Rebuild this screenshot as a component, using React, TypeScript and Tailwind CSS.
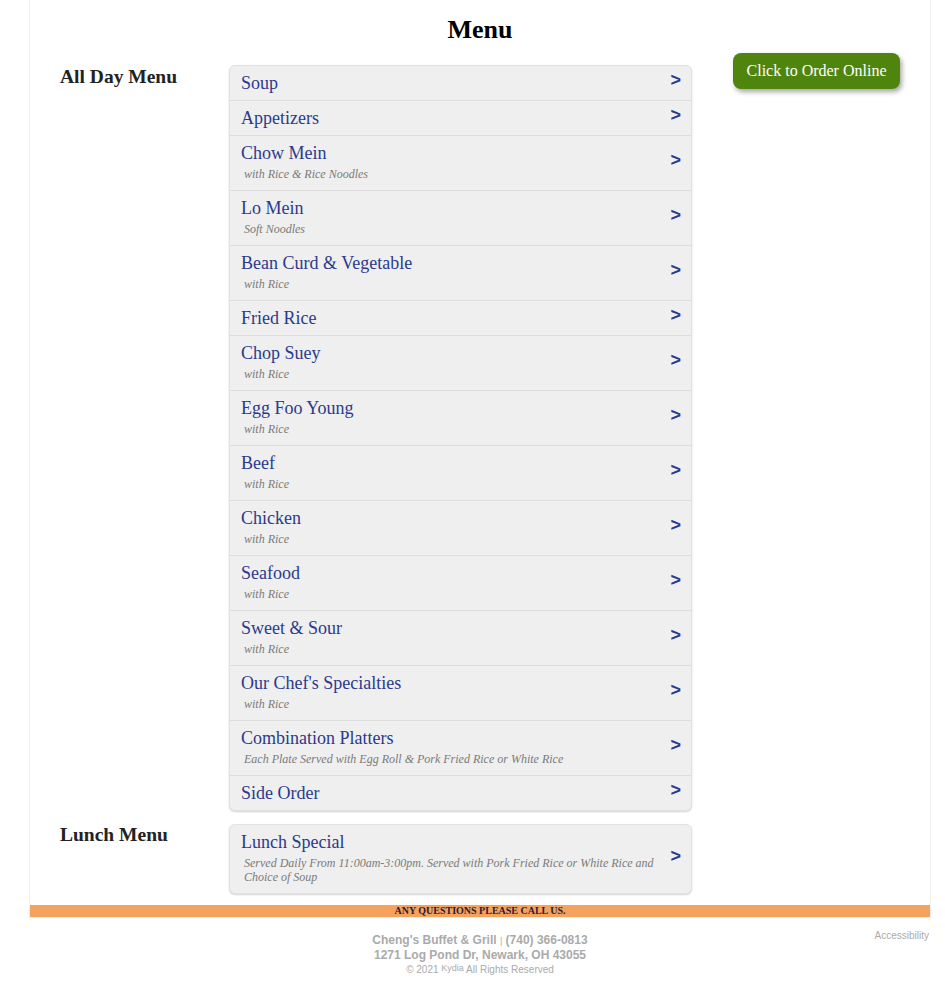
import React from "react";

type Item = { name: string; sub?: string };

const allDay: Item[] = [
  { name: "Soup" },
  { name: "Appetizers" },
  { name: "Chow Mein", sub: "with Rice & Rice Noodles" },
  { name: "Lo Mein", sub: "Soft Noodles" },
  { name: "Bean Curd & Vegetable", sub: "with Rice" },
  { name: "Fried Rice" },
  { name: "Chop Suey", sub: "with Rice" },
  { name: "Egg Foo Young", sub: "with Rice" },
  { name: "Beef", sub: "with Rice" },
  { name: "Chicken", sub: "with Rice" },
  { name: "Seafood", sub: "with Rice" },
  { name: "Sweet & Sour", sub: "with Rice" },
  { name: "Our Chef's Specialties", sub: "with Rice" },
  { name: "Combination Platters", sub: "Each Plate Served with Egg Roll & Pork Fried Rice or White Rice" },
  { name: "Side Order" },
];

const lunch: Item[] = [
  {
    name: "Lunch Special",
    sub: "Served Daily From 11:00am-3:00pm. Served with Pork Fried Rice or White Rice and Choice of Soup",
  },
];

function MenuList({ items }: { items: Item[] }) {
  return (
    <div className="w-[463px] rounded-[6px] border border-[#e2e2e2] bg-[#efefef] shadow-[0_1px_2px_rgba(0,0,0,0.18)]">
      {items.map((item, i) => (
        <div
          key={item.name}
          className={`flex items-center pl-[11px] pr-[10px] pt-[7px] pb-[7px] ${i > 0 ? "border-t border-[#dcdcdc]" : ""}`}
        >
          <div className="flex-1 min-w-0 pr-[14px]">
            <div className="text-[18px] leading-[20px] text-[#2b3a8c]">{item.name}</div>
            {item.sub && (
              <div className="mt-[4px] mb-[2px] pl-[3px] text-[12px] leading-[14px] italic text-[#7a7a7a]">
                {item.sub}
              </div>
            )}
          </div>
          <span className="-mt-[6px] font-['Liberation_Sans',Arial,sans-serif] text-[18px] font-bold leading-[20px] text-[#2b3a8c]">
            &gt;
          </span>
        </div>
      ))}
    </div>
  );
}

export default function App() {
  return (
    <div className="min-h-screen bg-white font-['Liberation_Serif','Times_New_Roman',serif]">
      <div className="ml-[29px] w-[902px] border-x border-b border-[#f0f0f0]">
        <h1 className="pt-[15px] text-center text-[26px] font-bold leading-[30px] text-black">Menu</h1>
        <div className="mt-[8px] flex">
          <div>
            <div className="flex pl-[30px]">
              <div className="mt-[13px] w-[169px] text-[19.5px] font-bold leading-[22px] text-[#222]">All Day Menu</div>
              <div className="mt-[12px]">
                <MenuList items={allDay} />
              </div>
            </div>
            <div className="mt-[13px] flex pl-[30px]">
              <div className="w-[169px] text-[19.5px] font-bold leading-[22px] text-[#222]">Lunch Menu</div>
              <MenuList items={lunch} />
            </div>
          </div>
          <div className="ml-[41px]">
            <button className="h-[36px] w-[167px] rounded-[8px] bg-[#4f850d] text-[16px] leading-[20px] text-white shadow-[2px_3px_5px_rgba(0,0,0,0.35)]">
              Click to Order Online
            </button>
          </div>
        </div>
        <div className="mt-[11px] h-[12px] bg-[#f4a25e] text-center text-[10px] font-bold leading-[12px] text-[#2e1a33]">
          ANY QUESTIONS PLEASE CALL US.
        </div>
      </div>
      <div className="relative ml-[29px] w-[902px] pt-[15px] text-center font-['Liberation_Sans',Arial,sans-serif] text-[#aaaaaa]">
        <div className="absolute right-[2px] top-[12px] text-[10px] leading-[12px]">Accessibility</div>
        <div className="text-[12px] font-bold leading-[14px]">
          Cheng's Buffet &amp; Grill <span className="text-[9px] font-normal">|</span> (740) 366-0813
        </div>
        <div className="text-[12px] font-bold leading-[14px]">1271 Log Pond Dr, Newark, OH 43055</div>
        <div className="mt-[2px] text-[10px] leading-[12px]">
          © 2021 <span className="relative -top-[2px] text-[9px]">Kydia</span> All Rights Reserved
        </div>
      </div>
    </div>
  );
}
